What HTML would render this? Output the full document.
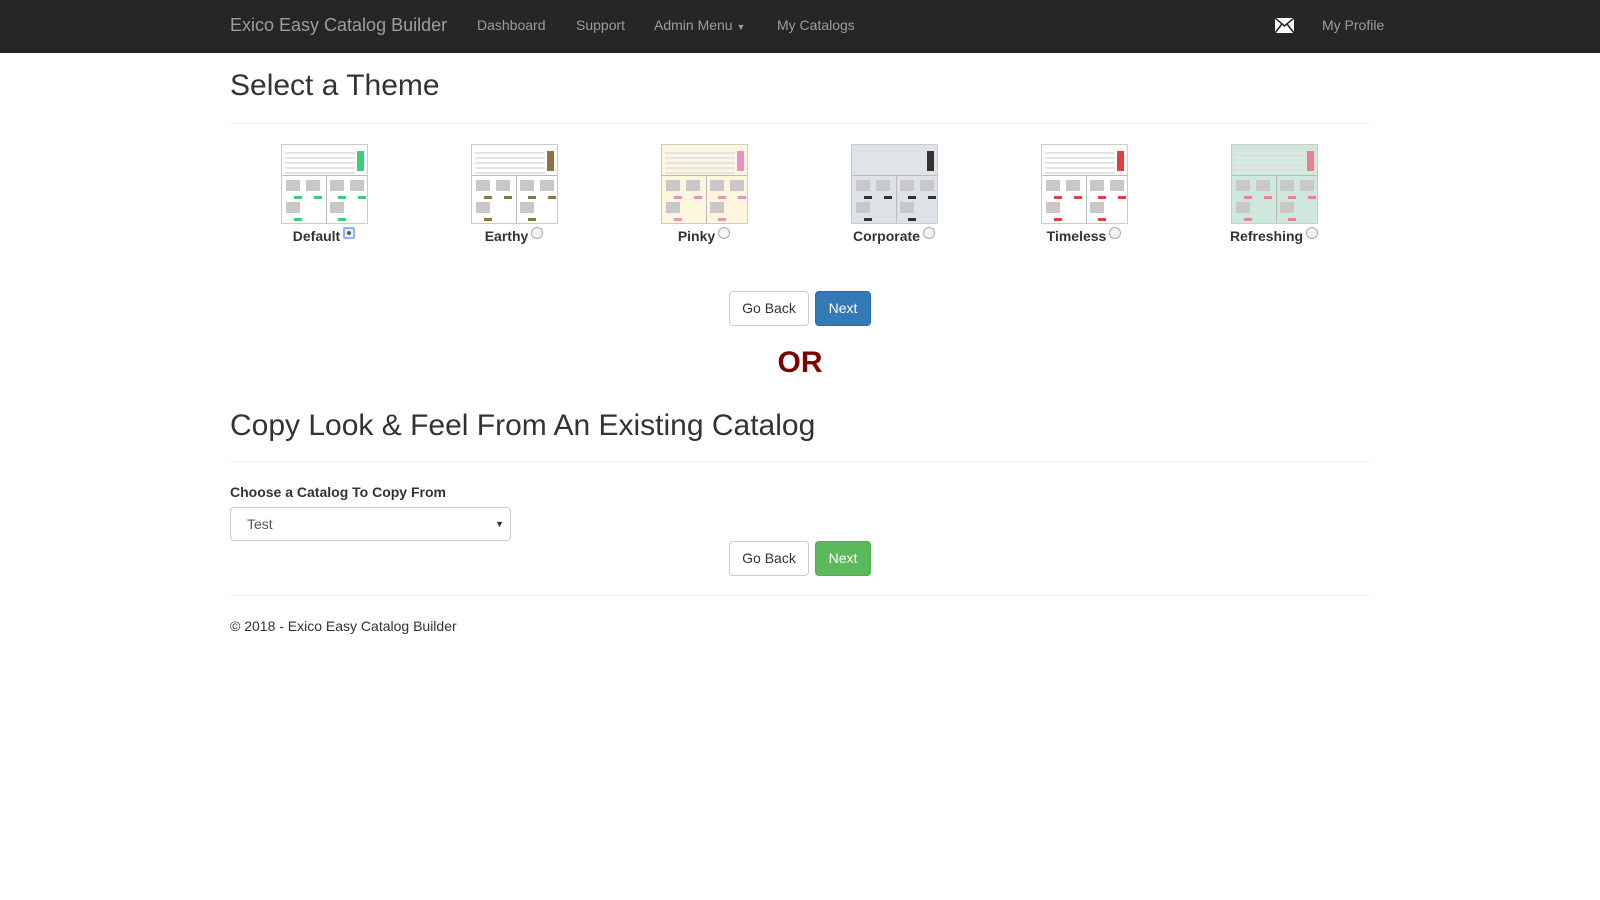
<!DOCTYPE html>
<html><head><meta charset="utf-8"><style>
*{box-sizing:border-box}
body{margin:0;font-family:"Liberation Sans",Arial,sans-serif;color:#333;background:#fff;font-size:14px}
.nav{height:53px;background:#262626;position:relative}
.nav span{position:absolute;top:17px;color:#9d9d9d;font-size:14px}
.brand{font-size:18px!important;top:15px!important;left:230px}
h1{font-weight:400;font-size:30px;margin:0;position:absolute;left:230px}
hr{position:absolute;left:230px;width:1140px;border:0;border-top:1px solid #eee;margin:0}
.col{position:absolute;top:144px;width:190px;text-align:center}
.th{width:87px;height:80px;margin:0 auto;border:1px solid #ccc;position:relative;overflow:hidden}
.th .tb{position:absolute;left:3px;right:12px;top:4px;height:26px}
.th .ln{height:2px;margin:3px 0;background:#e4e4e4}
.th .sq{position:absolute;width:14px;height:11px;background:#c8c8c8}
.th .bt{position:absolute;width:8px;height:3px}
.th .dv{position:absolute;top:30px;left:0;right:0;border-top:1px solid #bbb}
.th .vd{position:absolute;top:30px;bottom:0;left:44px;border-left:1px solid #bbb}
.lb{font-weight:bold;font-size:14px;margin-top:3px}
.rd{display:inline-block;width:12px;height:12px;border:1px solid #aaa;border-radius:50%;vertical-align:2px;margin-left:3px;background:#f4f4f4}
.btn{position:absolute;height:35px;border-radius:4px;font-size:14px;line-height:33px;text-align:center;border:1px solid #ccc;background:#fff;color:#333}
</style></head><body>
<div class="nav">
<span class="brand">Exico Easy Catalog Builder</span>
<span style="left:477px">Dashboard</span>
<span style="left:576px">Support</span>
<span style="left:654px">Admin Menu <span style="position:static;font-size:9px">▼</span></span>
<span style="left:777px">My Catalogs</span>
<svg style="position:absolute;left:1275px;top:18px" width="19" height="15" viewBox="0 0 19 15"><rect width="19" height="15" fill="#fff"/><path d="M0 0L9.5 8L19 0M0 15L7 6M19 15L12 6" stroke="#262626" stroke-width="1.6" fill="none"/></svg>
<span style="left:1322px">My Profile</span>
</div>
<h1 style="top:69px">Select a Theme</h1>
<hr style="top:123px">
<div id="cols"></div>
<div class="btn" style="left:729px;top:291px;width:80px">Go Back</div>
<div class="btn" style="left:815px;top:291px;width:56px;background:#337ab7;border-color:#2e6da4;color:#fff">Next</div>
<div style="position:absolute;left:0;width:1600px;text-align:center;top:346px;font-size:30px;font-weight:bold;color:#800000">OR</div>
<h1 style="top:409px">Copy Look &amp; Feel From An Existing Catalog</h1>
<hr style="top:461px">
<div style="position:absolute;left:230px;top:484px;font-weight:bold">Choose a Catalog To Copy From</div>
<div style="position:absolute;left:230px;top:507px;width:281px;height:34px;border:1px solid #ccc;border-radius:4px;padding:0 16px;line-height:32px;color:#555">Test<span style="position:absolute;right:6px;font-size:9px;color:#333">▼</span></div>
<div class="btn" style="left:729px;top:541px;width:80px">Go Back</div>
<div class="btn" style="left:815px;top:541px;width:56px;background:#5cb85c;border-color:#4cae4c;color:#fff">Next</div>
<hr style="top:595px">
<div style="position:absolute;left:230px;top:618px">© 2018 - Exico Easy Catalog Builder</div>
<script>
var t=[["Default","#fff","#3ccf7a"],["Earthy","#fff","#8a7440"],["Pinky","#fdf6dc","#e890c8"],["Corporate","#dde3e8","#333"],["Timeless","#fff","#e04040"],["Refreshing","#cfe8de","#e88090"]];
var h="";
t.forEach(function(a,i){
var s='<div class="col" style="left:'+(229+i*190)+'px"><div class="th" style="background:'+a[1]+'"><div class="tb">';
for(var k=0;k<5;k++)s+='<div class="ln"></div>';
s+='</div><div class="bt" style="left:75px;top:6px;width:7px;height:20px;background:'+a[2]+'"></div><div class="dv"></div><div class="vd"></div>';
[[4,35],[24,35],[48,35],[68,35],[4,57],[48,57]].forEach(function(p){s+='<div class="sq" style="left:'+p[0]+'px;top:'+p[1]+'px"></div><div class="bt" style="left:'+(p[0]+8)+'px;top:'+(p[1]+16)+'px;background:'+a[2]+'"></div>';});
s+='</div><div class="lb">'+a[0]+'<span class="rd"'+(i==0?' style="border:2px solid #8ab4f8;border-radius:2px;background:radial-gradient(#555 30%,#eee 40%)"':'')+'></span></div></div>';
h+=s;});
document.getElementById("cols").innerHTML=h;
</script>
</body></html>
